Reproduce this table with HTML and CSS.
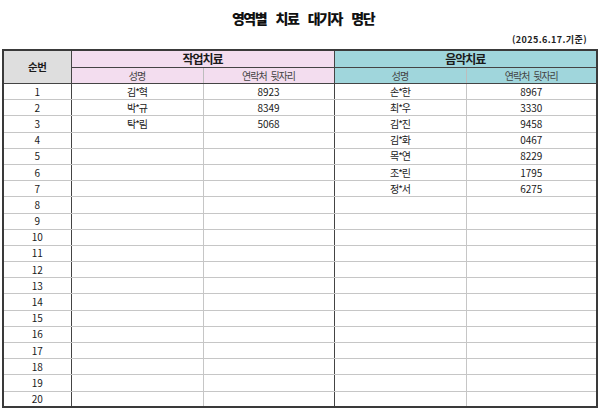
FILE: index.html
```html
<!DOCTYPE html>
<html lang="ko">
<head>
<meta charset="utf-8">
<title>영역별 치료 대기자 명단</title>
<link rel="stylesheet" href="styles.css">
</head>
<body>
<div class="page">
  <h1 class="title">영역별 치료 대기자 명단</h1>
  <div class="date">(2025.6.17.기준)</div>
  <table class="roster">
    <colgroup>
      <col class="c-no"><col class="c-name"><col class="c-tel"><col class="c-name"><col class="c-tel">
    </colgroup>
    <thead>
      <tr class="h1">
        <th rowspan="2" class="no-head">순번</th>
        <th colspan="2" class="occ">작업치료</th>
        <th colspan="2" class="mus">음악치료</th>
      </tr>
      <tr class="h2">
        <th class="occ sub">성명</th>
        <th class="occ sub tel">연락처 뒷자리</th>
        <th class="mus sub">성명</th>
        <th class="mus sub tel">연락처 뒷자리</th>
      </tr>
    </thead>
    <tbody>
      <tr><td class="no">1</td><td class="nm">김*혁</td><td class="tel">8923</td><td class="nm">손*한</td><td class="tel">8967</td></tr>
      <tr><td class="no">2</td><td class="nm">박*규</td><td class="tel">8349</td><td class="nm">최*우</td><td class="tel">3330</td></tr>
      <tr><td class="no">3</td><td class="nm">탁*림</td><td class="tel">5068</td><td class="nm">김*진</td><td class="tel">9458</td></tr>
      <tr><td class="no">4</td><td class="nm"></td><td class="tel"></td><td class="nm">김*화</td><td class="tel">0467</td></tr>
      <tr><td class="no">5</td><td class="nm"></td><td class="tel"></td><td class="nm">목*연</td><td class="tel">8229</td></tr>
      <tr><td class="no">6</td><td class="nm"></td><td class="tel"></td><td class="nm">조*린</td><td class="tel">1795</td></tr>
      <tr><td class="no">7</td><td class="nm"></td><td class="tel"></td><td class="nm">정*서</td><td class="tel">6275</td></tr>
      <tr><td class="no">8</td><td class="nm"></td><td class="tel"></td><td class="nm"></td><td class="tel"></td></tr>
      <tr><td class="no">9</td><td class="nm"></td><td class="tel"></td><td class="nm"></td><td class="tel"></td></tr>
      <tr><td class="no">10</td><td class="nm"></td><td class="tel"></td><td class="nm"></td><td class="tel"></td></tr>
      <tr><td class="no">11</td><td class="nm"></td><td class="tel"></td><td class="nm"></td><td class="tel"></td></tr>
      <tr><td class="no">12</td><td class="nm"></td><td class="tel"></td><td class="nm"></td><td class="tel"></td></tr>
      <tr><td class="no">13</td><td class="nm"></td><td class="tel"></td><td class="nm"></td><td class="tel"></td></tr>
      <tr><td class="no">14</td><td class="nm"></td><td class="tel"></td><td class="nm"></td><td class="tel"></td></tr>
      <tr><td class="no">15</td><td class="nm"></td><td class="tel"></td><td class="nm"></td><td class="tel"></td></tr>
      <tr><td class="no">16</td><td class="nm"></td><td class="tel"></td><td class="nm"></td><td class="tel"></td></tr>
      <tr><td class="no">17</td><td class="nm"></td><td class="tel"></td><td class="nm"></td><td class="tel"></td></tr>
      <tr><td class="no">18</td><td class="nm"></td><td class="tel"></td><td class="nm"></td><td class="tel"></td></tr>
      <tr><td class="no">19</td><td class="nm"></td><td class="tel"></td><td class="nm"></td><td class="tel"></td></tr>
      <tr><td class="no">20</td><td class="nm"></td><td class="tel"></td><td class="nm"></td><td class="tel"></td></tr>
    </tbody>
  </table>
</div>
</body>
</html>
```
FILE: styles.css
```css
html, body {
  margin: 0;
  padding: 0;
  background: #ffffff;
}
body {
  font-family: "Noto Sans CJK KR", "Noto Sans", sans-serif;
  color: #1a1a1a;
}
.page {
  width: 600px;
  height: 409px;
  overflow: hidden;
}
.title {
  margin: 0;
  padding-top: 6px;
  height: 24px;
  line-height: 24px;
  font-size: 14px;
  font-weight: 900;
  letter-spacing: -1.5px;
  word-spacing: 7px;
  text-align: center;
  color: #111;
  padding-left: 6px;
}
.date {
  margin-top: 3px;
  height: 14px;
  line-height: 14px;
  font-size: 9px;
  font-weight: 700;
  text-align: right;
  padding-right: 13px;
  letter-spacing: 0.4px;
  color: #222;
}
.roster {
  margin: 2px 0 0 2px;
  width: 595px;
  border-collapse: collapse;
  table-layout: fixed;
  border: 2px solid #3a3a3a;
}
.c-no { width: 68px; }
.c-name { width: 132px; }
.c-tel { width: 131px; }
.roster th,
.roster td {
  padding: 0;
  text-align: center;
  vertical-align: middle;
  font-size: 10px;
  line-height: 12px;
}
.roster .h1 th {
  height: 16px;
  font-size: 12px;
  font-weight: 700;
  letter-spacing: -1px;
  border: 1px solid #444;
}
.roster .h1 .no-head {
  background: #dedede;
  font-size: 10.5px;
  letter-spacing: -0.5px;
  border-right: 1px solid #444;
  border-bottom: 1px solid #444;
}
.roster .h2 th {
  height: 15px;
  font-weight: 400;
  color: #444;
  letter-spacing: -1px;
  word-spacing: 2px;
  border-bottom: 1px solid #444;
  border-top: 1px solid #444;
  border-left: 1px solid #bdbdbd;
}
.occ { background: #f3ddef; }
.mus { background: #a0d6dc; }
.roster .h2 .occ:first-child,
.roster .h2 th.mus:not(.tel) {
  border-left: 1px solid #444;
}
.roster tbody tr {
  height: 16.2px;
}
.roster td {
  border-bottom: 1px solid #c6c6c6;
  border-left: 1px solid #c6c6c6;
}
.roster td.no {
  border-left: none;
  border-right: 1px solid #444;
}
.roster td:nth-child(4) {
  border-left: 1px solid #444;
}
.roster td.nm {
  letter-spacing: -1px;
}
.roster tbody tr:last-child td {
  border-bottom: 2px solid #3a3a3a;
}
```
